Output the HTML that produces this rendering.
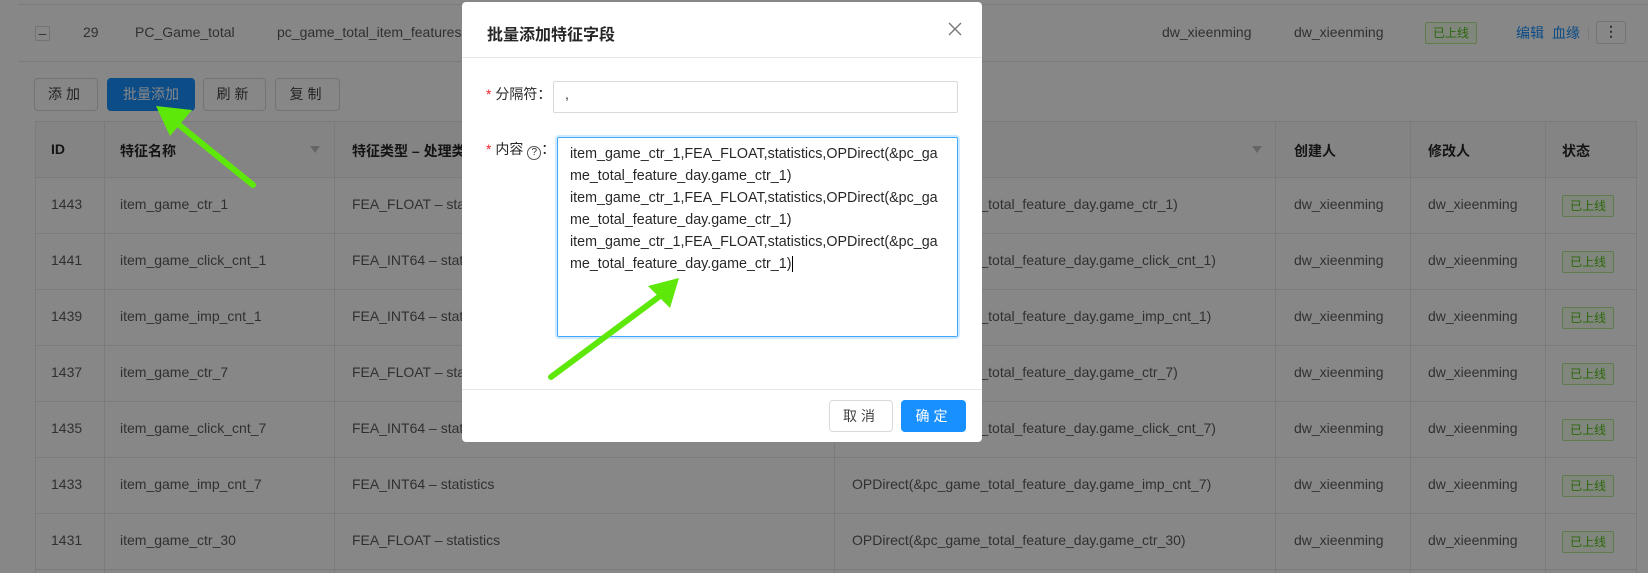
<!DOCTYPE html>
<html><head><meta charset="utf-8">
<style>
*{margin:0;padding:0;box-sizing:border-box}
body{width:1648px;height:573px;overflow:hidden;background:#fff;font-family:"Liberation Sans","Noto Sans CJK SC",sans-serif;font-size:14px;color:rgba(0,0,0,.65);position:relative}
.a{position:absolute;white-space:nowrap}
.hl{position:absolute;height:1px;background:#e8e8e8}
.vl{position:absolute;width:1px;background:#e8e8e8}
.btn{position:absolute;height:33px;border:1px solid #d9d9d9;border-radius:4px;background:#fff;text-align:center;line-height:31px;color:rgba(0,0,0,.75);letter-spacing:4px;font-size:14px}
.tag{position:absolute;width:52px;height:22px;border:1px solid #b7eb8f;background:#f6ffed;color:#52c41a;font-size:12px;text-align:center;line-height:20px;border-radius:2px}
.th{font-weight:bold;color:rgba(0,0,0,.85)}
.mask{position:absolute;left:0;top:0;width:1648px;height:573px;background:rgba(0,0,0,.47)}
.modal{position:absolute;left:462px;top:2px;width:520px;height:440px;background:#fff;border-radius:4px}
.flt{position:absolute;width:0;height:0;border-left:5px solid transparent;border-right:5px solid transparent;border-top:7px solid #bfbfbf}
</style></head><body>
<div class="hl" style="left:18px;top:4px;width:1630px"></div>
<div class="hl" style="left:18px;top:61px;width:1630px"></div>
<div class="a" style="left:35px;top:26px;width:15px;height:15px;border:1px solid #d9d9d9;border-radius:2px;text-align:center;line-height:12px">–</div>
<div class="a" style="left:83px;top:24px">29</div>
<div class="a" style="left:135px;top:24px">PC_Game_total</div>
<div class="a" style="left:277px;top:24px">pc_game_total_item_features</div>
<div class="a" style="left:1162px;top:24px">dw_xieenming</div>
<div class="a" style="left:1294px;top:24px">dw_xieenming</div>
<div class="tag" style="left:1425px;top:22px">已上线</div>
<div class="a" style="left:1516px;top:23px;color:#1890ff">编辑</div>
<div class="a" style="left:1552px;top:23px;color:#1890ff">血缘</div>
<div class="vl" style="left:1588px;top:27px;height:14px"></div>
<div class="a" style="left:1596px;top:21px;width:30px;height:23px;border:1px solid #d9d9d9;border-radius:3px;text-align:center;line-height:19px;font-weight:bold">⋮</div>

<div class="btn" style="left:34px;top:78px;width:64px">添加</div>
<div class="btn" style="left:107px;top:78px;width:88px;background:#1890ff;border-color:#1890ff;color:#fff;letter-spacing:0">批量添加</div>
<div class="btn" style="left:203px;top:78px;width:63px">刷新</div>
<div class="btn" style="left:275px;top:78px;width:65px">复制</div>

<div class="a" style="left:35px;top:121px;width:1602px;height:56px;background:#fafafa"></div>
<div class="hl" style="left:35px;top:121px;width:1602px"></div>
<div class="hl" style="left:35px;top:177px;width:1602px"></div>
<div class="hl" style="left:35px;top:233px;width:1602px"></div>
<div class="hl" style="left:35px;top:289px;width:1602px"></div>
<div class="hl" style="left:35px;top:345px;width:1602px"></div>
<div class="hl" style="left:35px;top:401px;width:1602px"></div>
<div class="hl" style="left:35px;top:457px;width:1602px"></div>
<div class="hl" style="left:35px;top:513px;width:1602px"></div>
<div class="hl" style="left:35px;top:569px;width:1602px"></div>
<div class="vl" style="left:35px;top:121px;height:452px"></div>
<div class="vl" style="left:104px;top:121px;height:452px"></div>
<div class="vl" style="left:334px;top:121px;height:452px"></div>
<div class="vl" style="left:834px;top:121px;height:452px"></div>
<div class="vl" style="left:1275px;top:121px;height:452px"></div>
<div class="vl" style="left:1410px;top:121px;height:452px"></div>
<div class="vl" style="left:1545px;top:121px;height:452px"></div>
<div class="vl" style="left:1636px;top:121px;height:452px"></div>
<div class="a th" style="left:51px;top:141px">ID</div>
<div class="a th" style="left:120px;top:141px">特征名称</div>
<div class="flt" style="left:310px;top:146px"></div>
<div class="a th" style="left:352px;top:141px">特征类型 – 处理类型</div>
<div class="flt" style="left:1252px;top:146px"></div>
<div class="a th" style="left:1294px;top:141px">创建人</div>
<div class="a th" style="left:1428px;top:141px">修改人</div>
<div class="a th" style="left:1562px;top:141px">状态</div>

<div class="a" style="left:51px;top:196px">1443</div><div class="a" style="left:120px;top:196px">item_game_ctr_1</div><div class="a" style="left:352px;top:196px">FEA_FLOAT – statistics</div><div class="a" style="left:852px;top:196px">OPDirect(&amp;pc_game_total_feature_day.game_ctr_1)</div><div class="a" style="left:1294px;top:196px">dw_xieenming</div><div class="a" style="left:1428px;top:196px">dw_xieenming</div><div class="tag" style="left:1562px;top:195px">已上线</div>
<div class="a" style="left:51px;top:252px">1441</div><div class="a" style="left:120px;top:252px">item_game_click_cnt_1</div><div class="a" style="left:352px;top:252px">FEA_INT64 – statistics</div><div class="a" style="left:852px;top:252px">OPDirect(&amp;pc_game_total_feature_day.game_click_cnt_1)</div><div class="a" style="left:1294px;top:252px">dw_xieenming</div><div class="a" style="left:1428px;top:252px">dw_xieenming</div><div class="tag" style="left:1562px;top:251px">已上线</div>
<div class="a" style="left:51px;top:308px">1439</div><div class="a" style="left:120px;top:308px">item_game_imp_cnt_1</div><div class="a" style="left:352px;top:308px">FEA_INT64 – statistics</div><div class="a" style="left:852px;top:308px">OPDirect(&amp;pc_game_total_feature_day.game_imp_cnt_1)</div><div class="a" style="left:1294px;top:308px">dw_xieenming</div><div class="a" style="left:1428px;top:308px">dw_xieenming</div><div class="tag" style="left:1562px;top:307px">已上线</div>
<div class="a" style="left:51px;top:364px">1437</div><div class="a" style="left:120px;top:364px">item_game_ctr_7</div><div class="a" style="left:352px;top:364px">FEA_FLOAT – statistics</div><div class="a" style="left:852px;top:364px">OPDirect(&amp;pc_game_total_feature_day.game_ctr_7)</div><div class="a" style="left:1294px;top:364px">dw_xieenming</div><div class="a" style="left:1428px;top:364px">dw_xieenming</div><div class="tag" style="left:1562px;top:363px">已上线</div>
<div class="a" style="left:51px;top:420px">1435</div><div class="a" style="left:120px;top:420px">item_game_click_cnt_7</div><div class="a" style="left:352px;top:420px">FEA_INT64 – statistics</div><div class="a" style="left:852px;top:420px">OPDirect(&amp;pc_game_total_feature_day.game_click_cnt_7)</div><div class="a" style="left:1294px;top:420px">dw_xieenming</div><div class="a" style="left:1428px;top:420px">dw_xieenming</div><div class="tag" style="left:1562px;top:419px">已上线</div>
<div class="a" style="left:51px;top:476px">1433</div><div class="a" style="left:120px;top:476px">item_game_imp_cnt_7</div><div class="a" style="left:352px;top:476px">FEA_INT64 – statistics</div><div class="a" style="left:852px;top:476px">OPDirect(&amp;pc_game_total_feature_day.game_imp_cnt_7)</div><div class="a" style="left:1294px;top:476px">dw_xieenming</div><div class="a" style="left:1428px;top:476px">dw_xieenming</div><div class="tag" style="left:1562px;top:475px">已上线</div>
<div class="a" style="left:51px;top:532px">1431</div><div class="a" style="left:120px;top:532px">item_game_ctr_30</div><div class="a" style="left:352px;top:532px">FEA_FLOAT – statistics</div><div class="a" style="left:852px;top:532px">OPDirect(&amp;pc_game_total_feature_day.game_ctr_30)</div><div class="a" style="left:1294px;top:532px">dw_xieenming</div><div class="a" style="left:1428px;top:532px">dw_xieenming</div><div class="tag" style="left:1562px;top:531px">已上线</div>

<div class="mask"></div>

<div class="modal">
  <div class="a" style="left:25px;top:19px;font-size:16px;font-weight:bold;color:rgba(0,0,0,.85)">批量添加特征字段</div>
  <svg class="a" style="left:486px;top:20px" width="14" height="14" viewBox="0 0 14 14"><path d="M1 1L13 13M13 1L1 13" stroke="#777" stroke-width="1.4"/></svg>
  <div class="hl" style="left:0;top:55px;width:520px"></div>
  <div class="a" style="left:24px;top:82px;color:rgba(0,0,0,.85)"><span style="color:#f5222d">*</span> 分隔符：</div>
  <div class="a" style="left:91px;top:79px;width:405px;height:32px;border:1px solid #d9d9d9;border-radius:2px;padding:4px 11px;color:rgba(0,0,0,.85)">,</div>
  <div class="a" style="left:24px;top:137px;color:rgba(0,0,0,.85)"><span style="color:#f5222d">*</span> 内容 <span style="display:inline-block;width:14px;height:14px;border:1px solid #555;border-radius:50%;font-size:10px;line-height:12px;text-align:center;vertical-align:-1px">?</span>：</div>
  <div class="a" style="left:95px;top:135px;width:401px;height:200px;border:1px solid #40a9ff;box-shadow:0 0 0 2px rgba(24,144,255,.2);border-radius:2px;padding:5px 12px;font-size:14.3px;line-height:22px;color:rgba(0,0,0,.85)">item_game_ctr_1,FEA_FLOAT,statistics,OPDirect(&amp;pc_ga<br>me_total_feature_day.game_ctr_1)<br>item_game_ctr_1,FEA_FLOAT,statistics,OPDirect(&amp;pc_ga<br>me_total_feature_day.game_ctr_1)<br>item_game_ctr_1,FEA_FLOAT,statistics,OPDirect(&amp;pc_ga<br>me_total_feature_day.game_ctr_1)<span style="border-left:1px solid #000;margin-left:1px"></span></div>
  <div class="hl" style="left:0;top:387px;width:520px"></div>
  <div class="btn" style="left:367px;top:398px;width:64px;height:32px;line-height:30px">取消</div>
  <div class="btn" style="left:439px;top:398px;width:65px;height:32px;line-height:30px;background:#1890ff;border-color:#1890ff;color:#fff">确定</div>
</div>

<svg class="a" style="left:0;top:0" width="1648" height="573" viewBox="0 0 1648 573">
  <line x1="253" y1="185" x2="178" y2="124" stroke="#5ee80a" stroke-width="6" stroke-linecap="round"/>
  <polygon points="156,106 192,110 170,136" fill="#5ee80a"/>
  <line x1="551" y1="377" x2="660" y2="296" stroke="#5ee80a" stroke-width="6" stroke-linecap="round"/>
  <polygon points="679,278 670,308 648,286" fill="#5ee80a"/>
</svg>
</body></html>
